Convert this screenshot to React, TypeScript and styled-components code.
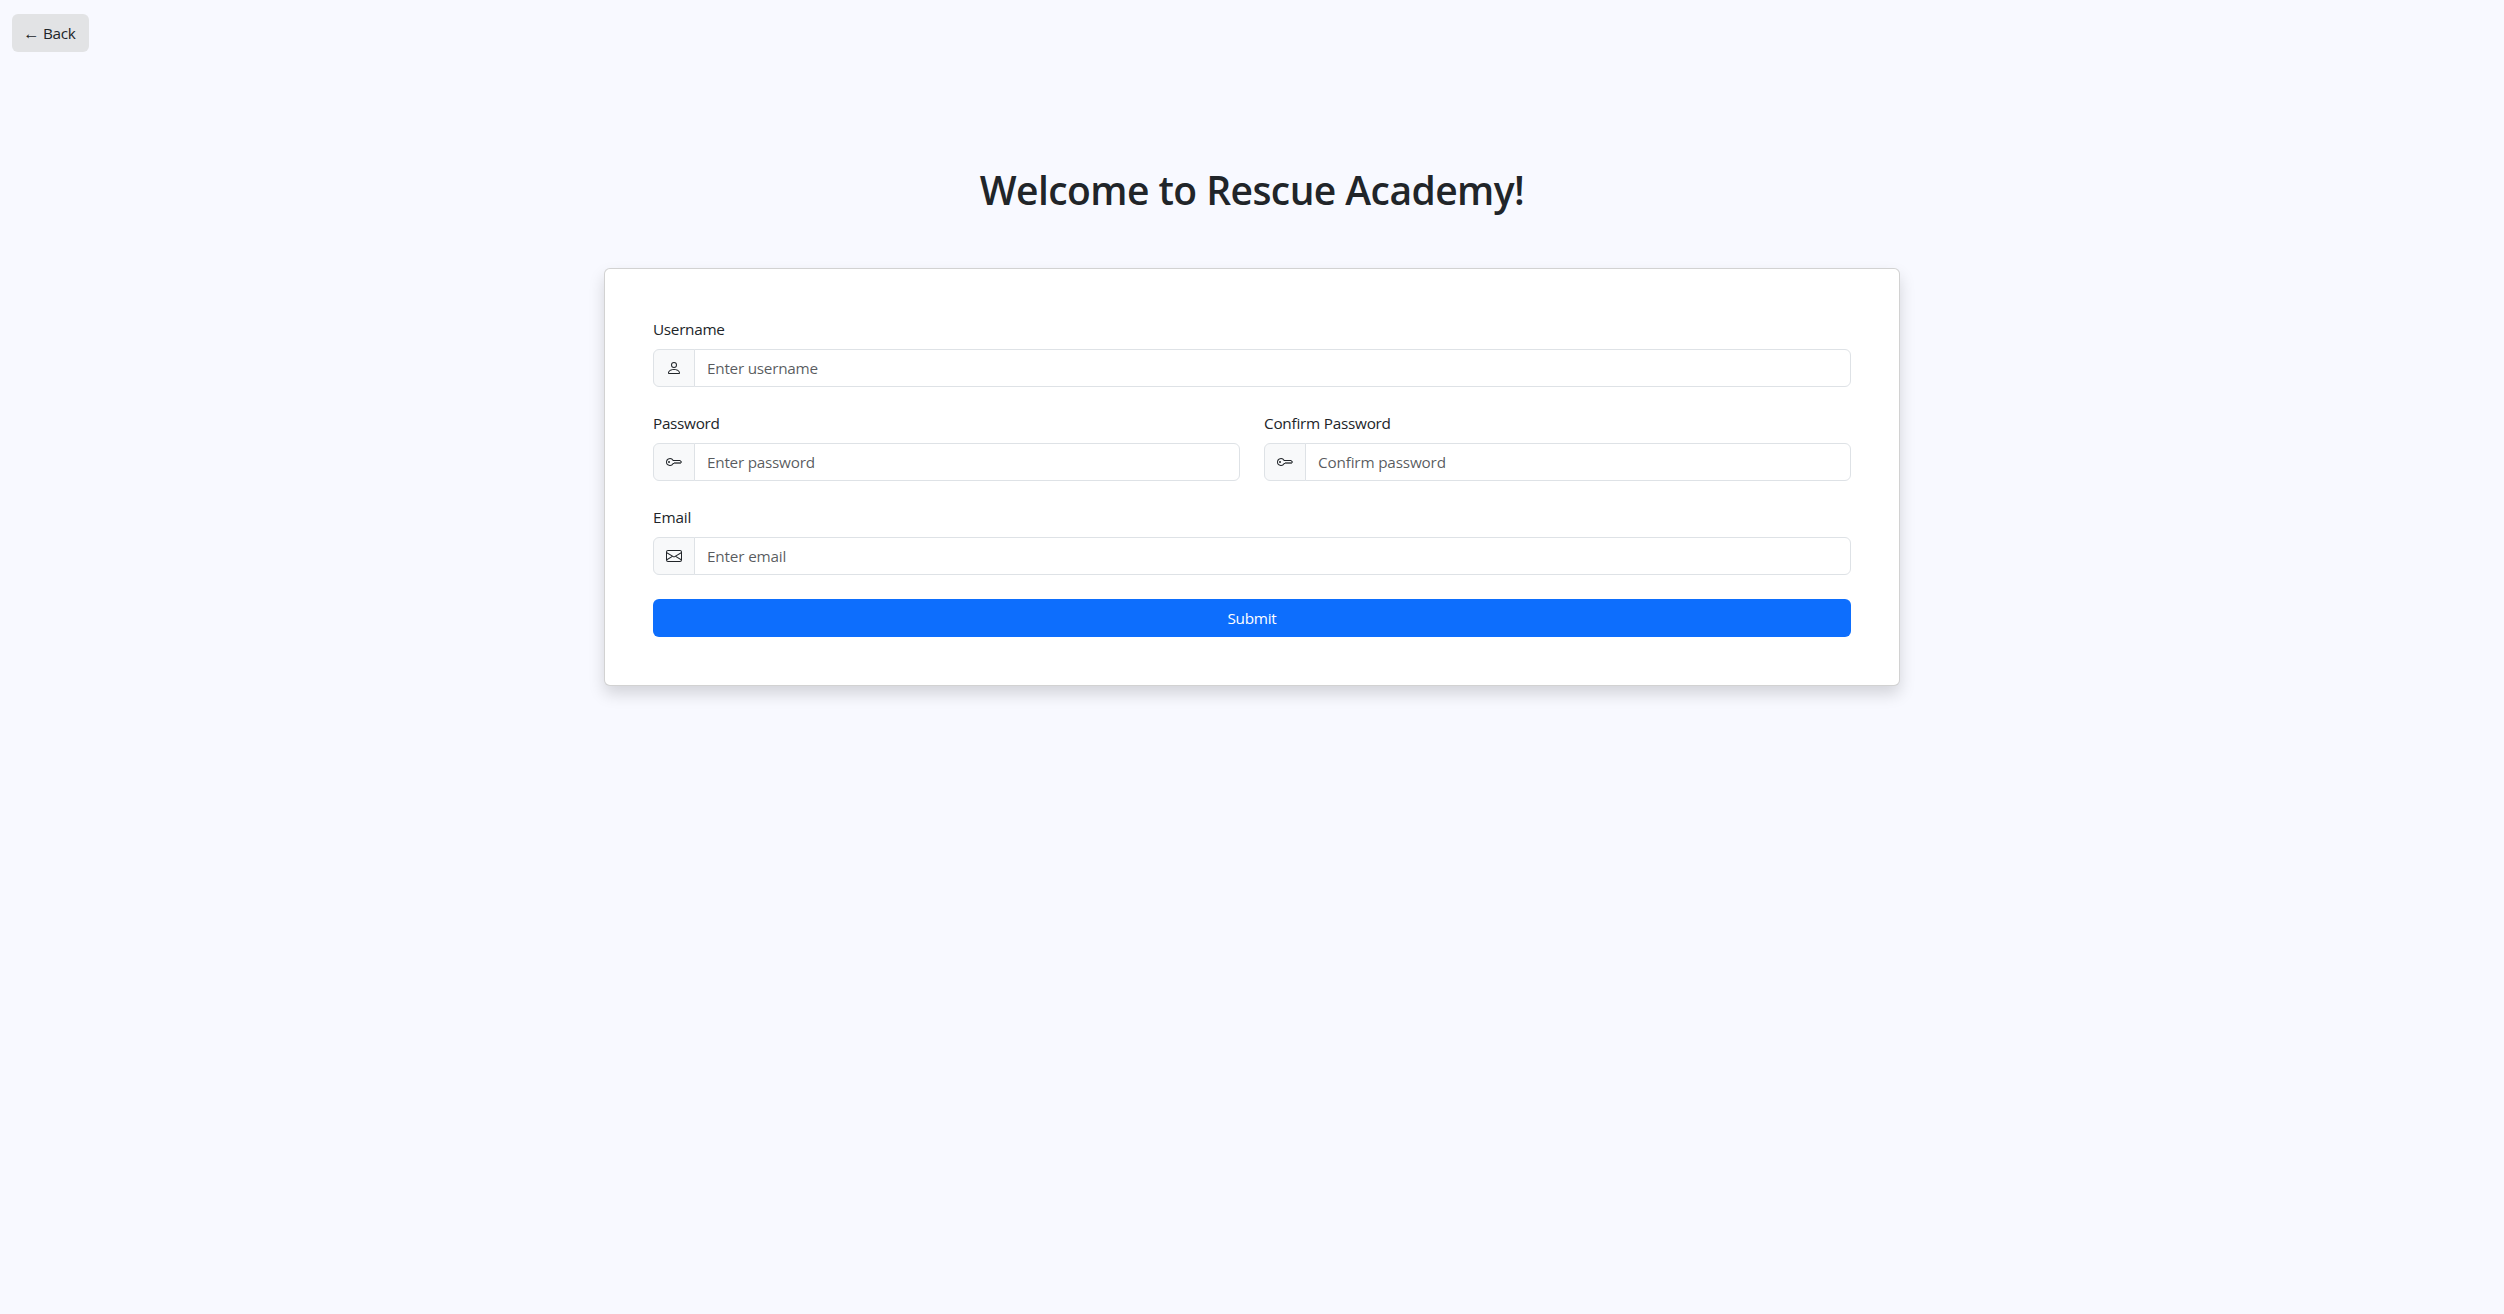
import React from "react";
import styled, { createGlobalStyle } from "styled-components";
import { BsEnvelope, BsKey, BsPerson } from "react-icons/bs";

const GlobalStyle = createGlobalStyle`
  *, *::before, *::after { box-sizing: border-box; }
  body {
    margin: 0;
    min-height: 100vh;
    background: #f8f9ff;
    color: #212529;
    font-family: "Segoe UI", "Open Sans", "Noto Sans", sans-serif;
    font-size: 15.3px;
    line-height: 24px;
  }
`;

const Page = styled.main`
  display: flex;
  flex-direction: column;
  align-items: center;
`;

const BackButton = styled.button`
  align-self: flex-start;
  display: flex;
  align-items: center;
  gap: 5px;
  width: 77px;
  height: 38px;
  margin: 14px 0 0 12px;
  padding: 0 12px;
  border: 0;
  border-radius: 6px;
  background: #e2e3e5;
  color: #212529;
  font: inherit;
  letter-spacing: -0.35px;
`;

const Arrow = styled.span`
  width: 14px;
  font-size: 16.5px;
  line-height: 22px;
  text-indent: -1px;
`;

const Title = styled.h1`
  margin: 114px 0 0;
  font-size: 39px;
  line-height: 48px;
  font-weight: 570;
  letter-spacing: -0.56px;
`;

const Card = styled.section`
  width: 1296px;
  margin-top: 54px;
  padding: 48px;
  border: 1px solid rgba(0, 0, 0, 0.175);
  border-radius: 6px;
  background: #fff;
  background-clip: border-box;
  box-shadow: 0 8px 16px rgba(0, 0, 0, 0.15);
`;

const Form = styled.form`
  display: grid;
  grid-template-columns: 1fr 1fr;
  gap: 24px;
`;

const FieldBox = styled.div<{ $wide?: boolean }>`
  display: flex;
  flex-direction: column;
  gap: 8px;
  grid-column: ${(p) => (p.$wide ? "1 / -1" : "auto")};
`;

const Label = styled.label<{ $spacing: number }>`
  letter-spacing: ${(p) => p.$spacing}px;
`;

const InputGroup = styled.div`
  display: flex;
  height: 38px;
`;

const Addon = styled.span`
  display: flex;
  align-items: center;
  padding: 0 12px;
  border: 1px solid #dee2e6;
  border-radius: 6px 0 0 6px;
  background: #f8f9fa;
  font-size: 16px;
`;

const Input = styled.input<{ $spacing: number }>`
  flex: 1;
  min-width: 0;
  margin-left: -1px;
  padding: 6px 12px;
  border: 1px solid #dee2e6;
  border-radius: 0 6px 6px 0;
  background: #fff;
  color: #212529;
  font: inherit;
  letter-spacing: ${(p) => p.$spacing}px;
  &::placeholder {
    color: rgba(33, 37, 41, 0.75);
    opacity: 1;
  }
`;

const SubmitButton = styled.button`
  grid-column: 1 / -1;
  height: 38px;
  border: 0;
  border-radius: 6px;
  background: #0d6efd;
  color: #fff;
  font: inherit;
  letter-spacing: -0.27px;
`;

type FieldProps = {
  id: string;
  label: string;
  placeholder: string;
  icon: React.ReactNode;
  type?: string;
  wide?: boolean;
  labelSpacing?: number;
  inputSpacing?: number;
};

function Field({ id, label, placeholder, icon, type = "text", wide, labelSpacing = -0.29, inputSpacing = -0.25 }: FieldProps) {
  return (
    <FieldBox $wide={wide}>
      <Label htmlFor={id} $spacing={labelSpacing}>{label}</Label>
      <InputGroup>
        <Addon>{icon}</Addon>
        <Input id={id} type={type} placeholder={placeholder} $spacing={inputSpacing} />
      </InputGroup>
    </FieldBox>
  );
}

export default function App() {
  return (
    <>
      <GlobalStyle />
      <Page>
        <BackButton type="button"><Arrow>←</Arrow>Back</BackButton>
        <Title>Welcome to Rescue Academy!</Title>
        <Card>
          <Form>
            <Field wide id="username" label="Username" placeholder="Enter username" icon={<BsPerson />} />
            <Field id="password" type="password" label="Password" placeholder="Enter password" icon={<BsKey />} />
            <Field id="confirm" type="password" label="Confirm Password" placeholder="Confirm password" icon={<BsKey />} labelSpacing={-0.24} inputSpacing={-0.18} />
            <Field wide id="email" type="email" label="Email" placeholder="Enter email" icon={<BsEnvelope />} labelSpacing={-0.12} inputSpacing={-0.17} />
            <SubmitButton type="button">Submit</SubmitButton>
          </Form>
        </Card>
      </Page>
    </>
  );
}
